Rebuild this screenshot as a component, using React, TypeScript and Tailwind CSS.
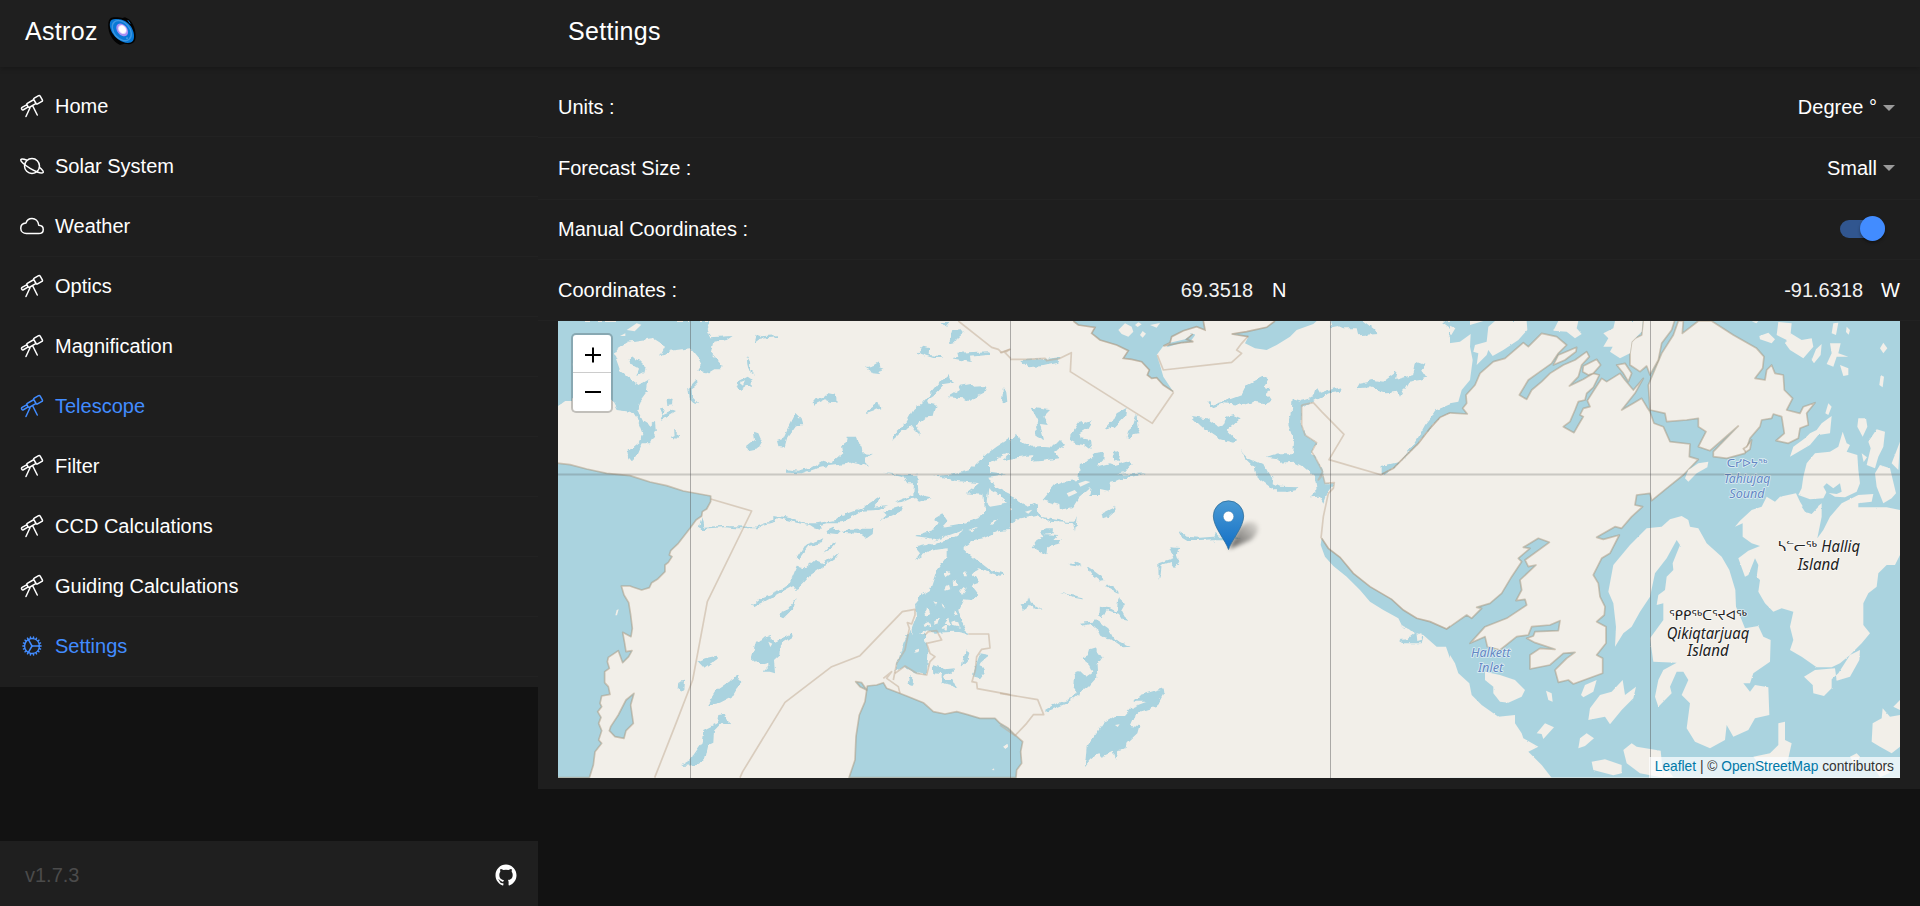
import React from "react";
import {
  IoTelescopeOutline,
  IoPlanetOutline,
  IoCloudOutline,
  IoCogOutline,
  IoLogoGithub,
} from "react-icons/io5";
import type { IconType } from "react-icons";

type NavItem = { label: string; icon: IconType; active?: boolean };

const NAV: NavItem[] = [
  { label: "Home", icon: IoTelescopeOutline },
  { label: "Solar System", icon: IoPlanetOutline },
  { label: "Weather", icon: IoCloudOutline },
  { label: "Optics", icon: IoTelescopeOutline },
  { label: "Magnification", icon: IoTelescopeOutline },
  { label: "Telescope", icon: IoTelescopeOutline, active: true },
  { label: "Filter", icon: IoTelescopeOutline },
  { label: "CCD Calculations", icon: IoTelescopeOutline },
  { label: "Guiding Calculations", icon: IoTelescopeOutline },
  { label: "Settings", icon: IoCogOutline, active: true },
];

const WATER = "#aad3df";
const LAND = "#f2efe9";

/* West sheet: open sea and bays that carry a coast line */
const WEST_SEA = [
  "M0,457 L60,464 110,477 170,490 240,497 300,516 350,527 400,543 482,558 482,575 470,597 457,605 455,618 438,630 420,655 385,700 362,722 358,735 366,740 355,757 345,765 345,785 322,808 305,818 298,833 275,840 250,832 240,828 214,828 222,855 236,878 242,915 247,955 243,980 218,967 224,1000 228,1025 246,1022 236,1040 218,1058 205,1022 175,1042 172,1055 178,1075 164,1085 164,1118 175,1130 180,1153 155,1158 150,1180 155,1190 143,1205 153,1222 146,1240 155,1262 146,1290 155,1300 135,1325 130,1365 118,1403 0,1403Z",
  "M182,1250 L205,1215 228,1170 252,1150 242,1185 250,1240 228,1262 222,1285 195,1280 178,1262Z",
  "M897,1403 L915,1350 918,1280 928,1215 945,1175 952,1128 980,1125 1000,1118 1010,1135 1045,1148 1070,1158 1120,1178 1150,1205 1185,1212 1220,1205 1250,1213 1290,1225 1335,1225 1350,1240 1375,1255 1395,1275 1418,1295 1412,1325 1415,1360 1400,1380 1398,1403Z",
  "M917,1115 L935,1118 950,1140 930,1130Z",
];

/* West sheet: lakes */
const WEST_LAKES = [
  "M24,33 L480,33 470,60 480,82 548,78 530,90 490,95 482,130 515,165 512,178 490,178 470,190 442,185 455,165 445,145 420,115 360,122 330,140 345,110 305,85 235,95 200,118 192,130 210,180 265,225 295,208 290,245 268,275 262,300 280,335 300,348 315,335 318,365 300,400 275,400 262,430 250,450 235,448 232,425 270,395 280,370 262,320 240,305 200,300 180,262 60,262 24,288Z",
  "M236,145 l15,-6 5,12 15,3 16,16 -4,16 -24,12 8,-22 -26,-14Z",
  "M350,265 l18,5 -2,16 -14,2Z M330,295 l12,-2 -4,20 30,-14 10,4 -48,30 8,-20Z",
  "M372,352 l6,14 14,8 -20,18 -10,-8 12,-6Z",
  "M438,210 L440,228 425,238 426,260 445,280 430,276 416,262 412,238Z",
  "M614,98 L620,74 632,79 684,76 684,82 630,86Z",
  "M590,137 L600,155 601,180 614,195 598,185 592,160Z M590,200 L608,212 608,228 592,224 570,240 560,230 566,212Z M572,216 l16,-6 -6,14Z",
  "M788,278 L800,264 820,260 832,249 858,254 860,278 842,275 825,268 790,284Z",
  "M948,172 L970,166 985,157 988,172 1000,176 988,192 968,190 960,178Z",
  "M947,310 L960,292 985,274 991,295 968,302Z",
  "M736,312 L752,328 757,346 738,346 712,382 704,410 685,408 681,393 700,386 712,360Z",
  "M612,365 L625,370 636,395 625,415 595,421 588,408 600,398 615,388Z",
  "M890,380 L918,380 922,398 935,410 938,430 968,432 945,445 945,460 955,470 930,460 905,455 890,462 835,468 790,478 755,490 710,488 712,478 745,482 790,470 820,452 845,460 880,430 876,408 888,400Z",
  "M1028,390 L1030,372 1070,335 1090,300 1120,275 1150,240 1175,210 1195,192 1200,205 1215,215 1200,222 1180,225 1148,258 1130,270 1135,280 1160,285 1150,320 1130,322 1100,345 1110,375 1095,360 1085,345 1055,365Z",
  "M1195,262 L1230,240 1225,228 1260,222 1270,230 1310,228 1305,245 1285,255 1262,275 1240,265Z",
  "M1205,145 L1225,140 1222,128 1318,124 1320,134 1260,140 1262,156 1232,150Z",
  "M1100,128 L1120,110 1138,115 1136,135 1170,138 1180,144 1150,144Z",
  "M1196,102 L1210,60 1232,58 1240,68 1225,80 1218,95Z M1172,36 l26,0 -12,14Z",
  "M1362,232 L1368,245 1370,275 1360,280 1356,270Z",
  "M1145,500 L1215,492 1260,480 1300,440 1340,410 1380,385 1380,420 1320,460 1320,485 1370,492 1318,500 1335,530 1380,552 1380,565 1340,550 1315,535 1310,575 1320,590 1380,580 1380,655 1350,662 1300,685 1270,690 1240,715 1270,742 1320,780 1362,790 1350,797 1285,778 1262,790 1290,815 1262,825 1285,855 1265,870 1240,868 1225,900 1235,935 1255,975 1210,965 1160,968 1115,962 1105,985 1085,975 1085,955 1098,920 1095,880 1115,855 1140,840 1160,780 1190,740 1190,715 1140,722 1095,750 1110,730 1095,712 1130,705 1160,688 1110,680 1095,678 1150,660 1165,640 1150,628 1180,610 1195,632 1180,650 1240,640 1285,625 1305,600 1300,555 1250,550 1290,520 1215,512 1180,502Z",
  "M1000,488 L1060,496 1102,494 1105,550 1125,562 1145,565 1110,575 1095,560 1060,575 1035,578 1050,570 1090,555 1092,520 1072,520 1060,502Z",
  "M988,560 L985,575 972,590 1015,585 980,600 938,602 900,625 875,640 830,640 810,645 812,660 795,655 780,645 740,638 680,622 676,635 640,645 620,655 560,655 520,652 475,655 460,662 446,655 455,618 460,650 520,648 615,650 670,632 670,615 720,625 765,640 800,640 855,630 870,618 935,595Z",
  "M1058,588 L1050,605 990,634 1010,615 1000,605Z",
  "M830,660 L850,650 870,665 860,675 832,672Z M876,668 L895,656 970,656 968,672 950,685 930,672Z",
  "M820,685 L812,700 775,708 745,750 740,745 765,705Z M860,694 L848,712 820,728 838,708Z",
  "M603,887 L635,862 690,840 720,818 740,770 765,775 795,750 820,760 868,727 855,745 820,768 782,795 760,820 740,840 730,828 680,855 612,892Z",
  "M740,864 L730,895 700,925 690,920 695,905 712,898Z",
  "M605,1045 L618,995 658,978 675,995 725,973 728,980 690,1005 688,1035 672,1050 675,1090 660,1085 640,1085 655,1070 655,1058 630,1065Z",
  "M442,1055 L465,1045 500,1037 500,1048 460,1075Z M386,1140 L388,1115 402,1112 400,1140 392,1146Z",
  "M470,1188 L500,1140 570,1092 565,1110 578,1115 560,1135 545,1160 510,1178Z",
  "M390,1368 L420,1350 455,1300 460,1260 500,1240 505,1215 525,1212 530,1230 545,1243 515,1238 492,1262 490,1298 475,1305 465,1350 440,1365Z",
  "M1035,1085 L1060,1000 1080,955 1085,975 1125,968 1125,990 1135,1030 1130,1095 1100,1090 1060,1070Z",
  "M1148,1065 L1185,1078 1215,1075 1200,1090 1180,1095 1185,1110 1210,1110 1222,1138 1205,1125 1175,1118 1175,1092 1150,1090Z",
  "M1250,1018 L1258,1030 1250,1055 1235,1070 1240,1045Z M1270,1090 L1280,1060 1290,1030 1318,1035 1290,1060 1305,1085 1290,1105 1270,1100Z M1078,1095 l12,15 -5,18 -12,-6Z",
];

const WEST_SPECKS = [
  "M1180,790 l14,-8 8,10 -14,10Z M1205,815 l14,-6 6,14 -18,6Z M1240,790 l8,-6 6,18 -12,0Z M1185,830 l12,-6 4,14 -14,4Z M1230,845 l14,-14 6,6 -14,18Z",
  "M1125,900 l10,-8 6,20 -12,10Z M1150,870 l12,6 -4,8Z M1150,935 l20,-10 -4,14 -16,6Z M1185,940 l10,-14 8,18 -12,8Z M1215,900 l8,14 -12,6Z M1205,930 l20,4 4,16 -20,-6Z M1095,1020 l12,-4 2,10 -12,2Z M1175,880 l8,8 -4,8Z M1120,945 l18,-10 6,12 -18,6Z M1170,960 l16,-12 6,10Z",
  "M1130,700 l50,-18 60,-22 -20,18 -70,26Z M1255,660 l26,-10 -14,14Z M1320,640 l28,-14 -20,18Z",
  "M230,60 l30,-20 14,4 -20,20Z M210,78 l16,-8 0,8Z M68,160 l4,4 -3,6Z M1360,1310 l12,-8 2,8 -8,6Z M1325,1380 l7,-5 1,6Z M200,900 l6,-2 -5,18 -5,0Z M655,995 l12,6 -6,10Z",
];

const WEST_BOUNDS = [
  "M482,567 L605,603 472,875 428,1110 380,1235 314,1403",
  "M570,1403 L578,1385 705,1177 845,1070 930,1037 1057,905 1095,898 1095,915 1085,942 1072,938 1078,955 1065,1020 1040,1060 1030,1110",
  "M1225,33 L1325,112 1345,118 1355,128 1380,118",
  "M1255,972 L1316,972 1320,1014 1295,1018 1280,1040 1276,1080 1266,1115 1280,1118 1282,1136 1380,1154",
  "M1125,975 L1135,965 1160,962 1175,990 1130,1000 1140,1030 1155,1040 1140,1055 1130,1095 1100,1090 1065,1068 1035,1090 M1000,1105 L1025,1085 1010,1105 1045,1130 1050,1150",
];

/* Middle sheet */
const MID_SEA = [
  "M220,33 L610,33 615,60 590,50 550,62 515,80 510,98 490,108 470,135 480,165 490,200 520,245 490,225 470,203 455,205 442,195 448,180 425,155 395,148 370,145 385,122 350,105 300,90 275,70 285,52 235,45Z",
  "M825,33 L800,52 740,65 695,72 745,80 735,100 765,115 800,120 830,105 870,80 890,60 940,42 950,33Z",
  "M500,112 L545,98 580,95 560,88 578,72 555,88 510,98Z",
  "M965,685 L985,715 1020,742 1060,790 1110,830 1175,868 1210,900 1250,925 1290,935 1340,957 1365,937 1380,935 1380,1110 1365,1075 1350,1045 1338,1010 1310,1010 1270,975 1245,968 1205,945 1195,925 1150,900 1110,875 1080,840 1040,800 1000,768 975,740 962,705Z",
];

const MID_LAKES = [
  "M60,150 L130,148 182,142 175,158 130,168 85,172Z M8,232 L18,240 22,275 8,280Z M95,293 L150,300 130,320 145,345 120,342 132,390 110,380 105,350 118,335Z",
  "M0,415 L30,395 50,368 60,395 95,410 130,408 160,410 182,388 195,405 165,425 178,445 130,452 95,455 100,435 60,440 5,452 30,432 0,435Z",
  "M212,392 L215,370 240,332 250,342 275,333 262,355 238,370 242,385 270,390 275,420 255,405 230,402Z",
  "M312,360 L340,330 350,310 378,295 376,318 345,350Z M410,310 L412,350 422,370 400,372 392,388 380,385 385,362 398,350Z",
  "M128,570 L165,525 190,515 235,510 240,462 280,445 278,430 312,425 310,450 290,470 330,460 345,465 380,455 395,460 370,490 350,495 400,492 438,490 400,500 330,515 325,545 300,540 300,555 268,555 272,530 238,560 220,590 180,600 178,585Z M340,420 l20,14 -4,20 -14,-8Z",
  "M0,492 l16,2 -10,6Z M0,545 L40,565 80,588 118,578 110,600 130,622 200,635 222,635 230,622 225,665 220,640 150,635 110,615 60,625 20,645 32,660 0,662 0,620 40,595 0,562Z",
  "M305,610 L345,590 348,602 330,618 308,625Z M120,665 L135,655 162,655 160,668 130,672 175,675 160,690 185,690 180,700 145,708 142,735 128,728 95,710 110,690 130,680Z",
  "M205,765 L225,757 248,765 238,770Z M260,768 L275,778 318,810 300,812 270,790Z M315,828 L338,826 358,852 335,840Z M180,848 L248,862 246,868 215,862Z M62,880 L85,878 88,862 92,880 125,900 105,896 90,885 68,900Z M0,788 l12,5 -10,4Z",
  "M355,865 L375,882 365,900 382,932 370,930 358,912 320,900 308,925 298,915 300,890 330,895 350,905Z M240,938 L275,935 285,928 325,955 340,985 392,1010 370,1012 330,985 305,980 300,965 270,942 245,948Z",
  "M245,1045 L265,1035 270,1018 290,1012 290,1032 308,1038 290,1065 292,1100 265,1130 240,1150 200,1180 140,1205 135,1200 160,1185 215,1165 230,1145 220,1130 222,1095 240,1083 258,1100 280,1085 270,1065Z",
  "M255,1368 L260,1310 290,1270 310,1240 345,1218 375,1218 400,1190 440,1175 400,1175 420,1155 490,1135 494,1145 470,1190 420,1205 400,1222 390,1245 418,1248 412,1270 380,1300 375,1315 355,1320 345,1348 338,1325 305,1340 295,1330 270,1350Z",
  "M538,662 L560,680 600,683 640,680 645,670 655,680 700,680 720,685 690,688 640,688 600,690 565,690 545,678Z M640,690 l5,16 -6,-6Z M508,712 L540,714 530,730 538,755 522,775 515,765 515,755 485,765 482,790 476,810 475,760 520,745Z",
  "M622,272 L632,295 670,280 730,285 760,275 795,280 812,272 800,255 805,235 790,230 805,208 788,200 740,225 725,255 690,268 635,285 628,270Z",
  "M572,318 L620,325 655,350 670,345 680,320 700,315 722,325 700,345 680,360 708,390 700,398 660,388 610,355Z",
  "M723,420 L745,445 790,465 800,485 820,500 818,520 840,530 895,532 890,540 865,545 830,545 795,520 770,500 765,475 740,450Z",
  "M575,70 l10,6 -12,16 -24,8Z",
  "M878,265 L905,272 940,262 950,232 960,248 985,240 1022,232 1018,245 990,250 960,262 935,275 905,295 905,345 915,375 950,398 935,425 950,450 968,480 975,520 1003,520 980,550 970,578 960,560 930,562 950,540 945,500 910,470 880,455 840,458 832,445 800,440 835,430 880,430 882,395 865,345 875,310Z",
  "M1070,235 L1080,218 1120,210 1150,215 1190,185 1185,210 1240,195 1248,155 1275,165 1262,185 1285,200 1260,210 1225,215 1200,260 1190,245 1160,250 1110,232Z",
  "M1145,490 L1145,468 1200,455 1245,400 1275,345 1310,300 1380,270 1380,310 1350,308 1320,322 1290,355 1255,400 1215,440 1180,475 1150,495Z",
  "M990,33 L1090,33 1125,60 1132,72 1075,76 1070,55 1030,55 1015,48 995,52Z M1325,38 L1380,33 1380,92 1345,78 1355,60Z",
  "M1200,945 L1240,965 1270,980 1265,1000 1215,1000 1200,990 1222,988 1250,965Z",
];

const MID_SPECKS = [
  "M355,60 L375,40 395,50 400,65 385,80 365,72Z M420,75 l8,-12 10,8 -10,12Z M450,45 l30,-6 -10,14Z M405,45 l10,-8 10,6 -12,8Z M200,550 l24,-10 8,8 -26,12Z M305,1150 l14,0 -8,6Z M345,1245 l14,-2 -6,8Z M1250,975 l14,-6 2,20 -14,4Z M10,1310 l12,-8 2,8 -8,6Z",
  "M235,520 l22,-8 14,4 -30,14Z M75,605 l22,-6 -12,12Z",
];

const MID_BOUNDS = [
  "M0,128 L30,118 15,128 32,145 M30,148 L80,148 135,145 140,152 180,145 214,128 211,185 457,340 521,247",
  "M472,135 L490,180 695,157 725,130 710,120 725,100 745,78",
  "M905,285 L940,278 965,305 1032,373 987,449 1145,495",
  "M985,550 L970,620 963,685",
  "M0,1150 L113,1169 131,1214 100,1214 80,1240 45,1277 0,1245",
  "M905,285 L905,345 915,375 950,398 935,425 950,450 968,485 955,510 968,495 975,520 1003,518 1000,535 985,550",
];

const MID_COAST =
  "M220,33 L235,45 285,52 275,70 300,90 350,105 385,122 370,145 395,148 425,155 448,180 442,195 455,205 470,203 490,225 520,245 M610,33 L615,60 590,50 550,62 515,80 510,98 490,108 545,98 580,95 560,88 578,72 M825,33 L800,52 740,65 695,72 745,80 M965,685 L985,715 1020,742 1060,790 1110,830 1175,868 1210,900 1250,925 1290,935 1340,957 1352,948 M1145,493 L1180,475 1215,440 1255,400 1290,355 1320,322 1350,308";

/* East sheet: drawn as land over open water */
const EAST_COAST = [
  "M-40,312 L-10,308 52,312 38,295 50,280 48,255 75,225 90,190 130,155 165,145 220,98 235,110 275,70 320,80 350,105 325,130 305,160 270,185 235,210 208,255 230,268 245,240 275,215 300,190 340,165 375,150 410,125 418,140 395,165 385,200 358,228 400,208 430,190 448,195 430,232 410,250 405,270 385,275 375,300 360,335 340,350 372,368 385,345 400,320 390,315 400,295 420,290 412,272 440,228 455,205 470,215 510,190 525,210 550,240 580,205 555,250 515,300 550,280 575,265 590,290 600,305 612,340 640,350 660,395 720,402 718,440 745,448 700,495 650,535 605,572 600,550 560,555 555,585 578,590 545,620 515,655 495,650 440,682 460,688 508,675 480,730 455,745 430,795 445,820 450,860 465,890 463,915 440,935 468,950 468,1000 440,1035 458,1045 458,1090 370,1122 355,1110 325,1117 315,1080 350,1045 375,1027 340,1030 300,1065 240,1077 240,1035 270,1015 315,1018 255,998 230,985 250,978 255,965 325,962 330,932 300,945 245,950 235,975 200,980 150,1020 112,1010 105,980 60,1000 105,950 170,925 230,885 225,868 198,872 215,840 210,810 258,765 235,770 225,750 298,697 265,685 220,712 240,715 205,745 215,755 185,800 155,850 120,880 80,892 95,895 65,925 50,915 0,950 -25,938 -40,960Z",
  "M700,33 L697,70 745,33 785,33 850,75 920,115 942,140 938,175 915,205 945,210 950,180 965,165 975,190 1000,195 1003,240 1028,265 1010,300 1050,310 1060,290 1095,278 1070,310 1075,345 1050,355 1045,385 1015,400 978,392 1003,370 995,320 970,312 965,325 935,330 930,350 900,385 885,430 830,445 790,440 790,425 865,348 780,422 745,410 768,365 745,350 745,325 710,330 650,335 645,310 600,300 595,225 635,130 670,75 685,33Z",
  "M580,28 L675,28 665,60 635,100 625,150 600,195 590,168 570,185 540,165 540,130 545,95 555,85 575,75Z",
  "M310,165 L325,135 380,112 378,125 345,150Z M398,185 L400,168 440,148 452,165 430,190 415,195Z",
  "M905,390 l-5,28 -12,8 -8,-10 10,-6Z M500,165 l25,-5 20,30 -10,25 -15,-25Z",
];

const EAST_ISLANDS = [
  "M-20,1010 L0,1035 15,1060 25,1090 58,1120 65,1155 95,1185 145,1220 195,1215 195,1240 215,1270 220,1285 265,1310 235,1325 275,1365 310,1410 -20,1410Z",
  "M-4,100 L30,95 62,72 60,110 68,150 60,210 35,240 25,275 0,280 -4,280Z M-4,45 l20,10 -12,20 -8,-4Z",
  "M135,33 L230,33 232,60 205,90 160,120 128,138 115,120 110,135 80,165 85,130 70,125 75,105 110,95 115,50Z M60,33 l40,0 -40,12Z",
  "M325,33 L385,33 380,55 395,72 375,85 350,65 310,62Z",
  "M495,33 L578,33 575,65 545,95 540,130 510,145 480,125 488,110 460,110 475,85 460,70 490,55Z",
  "M985,36 L1025,40 1022,70 1055,90 1085,85 1090,110 1060,145 1020,120 1005,100 1010,90 980,75Z M928,78 L955,68 975,88 965,100 930,88Z M1115,102 L1112,135 1092,160 1085,150 1098,118Z M1140,100 L1172,100 1165,130 1195,140 1160,140 1150,170 1130,162 1145,130Z M1170,165 L1195,175 1195,195 1180,198Z M1150,40 L1165,38 1158,75 1145,70Z M1190,50 l10,10 -4,14 -8,-8Z M1300,98 L1312,115 1300,130 1290,115Z M1292,195 L1302,200 1298,232 1288,225Z M905,34 l20,0 -6,6Z",
  "M1135,280 L1145,290 1135,315 1126,310Z M1145,318 L1140,370 1105,375 1080,405 1020,440 1030,410 1065,385 1080,370 1100,360 1115,340Z M1225,325 L1248,325 1252,350 1238,380 1222,350Z",
  "M775,455 L772,472 740,490 715,515 705,505 715,480 745,460Z",
  "M1178,365 L1190,400 1200,405 1190,425 1222,435 1225,480 1230,520 1220,545 1185,562 1155,560 1130,545 1120,565 1080,568 1045,555 1055,535 1060,500 1070,460 1095,430 1140,425 1165,410Z",
  "M1280,358 L1305,365 1300,410 1285,440 1275,475 1250,465 1262,415 1255,395Z M1350,395 L1345,480 1325,460Z M1290,465 L1320,475 1338,550 1325,565 1300,580 1280,530 1275,490Z M1235,430 l16,12 -10,14Z",
  "M1350,600 L1310,592 1225,592 1225,580 1265,575 1270,552 1225,555 1175,580 1140,620 1120,660 1102,685 1115,620 1115,580 1100,592 1070,608 1050,575 1038,550 990,560 975,575 950,560 935,590 905,600 870,632 855,650 878,640 878,680 905,700 930,708 895,722 865,745 885,800 895,795 915,745 925,765 920,800 930,810 925,845 945,880 970,905 995,895 1030,905 1020,950 1030,990 1020,1020 1055,1040 1100,1072 1145,1072 1170,1060 1200,1035 1230,1020 1228,1050 1200,1100 1160,1112 1155,1075 1095,1080 1062,1100 1088,1125 1090,1150 1122,1158 1145,1135 1145,1108 1165,1090 1200,1035 1235,1000 1260,970 1240,945 1240,880 1255,850 1280,830 1285,790 1310,765 1335,765 1350,735Z",
  "M695,618 L715,630 720,650 745,655 770,700 815,740 838,780 856,840 858,890 875,930 885,955 925,948 940,980 962,990 960,1055 910,1090 900,1120 880,1120 900,1145 915,1125 955,1132 958,1215 915,1225 895,1260 850,1280 830,1245 825,1290 780,1315 735,1295 710,1255 720,1180 695,1155 715,1110 700,1085 680,1085 660,1130 665,1150 625,1190 615,1160 625,1110 640,1080 680,1058 610,1055 605,1020 600,985 640,930 640,880 620,885 625,855 645,840 650,800 670,780 668,760 690,705 680,690 650,745 615,790 600,860 570,905 545,950 520,970 495,1010 498,950 490,880 475,845 490,765 540,705 590,655 635,650 660,628Z",
  "M105,1085 L150,1095 195,1110 225,1140 215,1160 175,1178 150,1175 130,1150 130,1130 105,1110Z M288,1142 L305,1150 308,1175 295,1170Z M440,1110 L430,1145 400,1162 393,1155 405,1125Z",
  "M415,1230 L420,1195 450,1155 485,1145 518,1110 525,1155 558,1130 550,1165 515,1200 480,1243 465,1220Z M260,1270 L285,1240 312,1252 280,1287 275,1272Z M385,1315 L390,1285 410,1270 432,1285 405,1308Z M425,1355 L465,1348 515,1365 515,1390 490,1396 450,1385 430,1380Z M520,1320 L545,1300 560,1310 632,1322 640,1403 570,1390 530,1360Z",
  "M1350,1170 L1330,1190 1350,1200Z M1298,1195 L1320,1220 1350,1215 1350,1310 1325,1330 1290,1310 1265,1295 1268,1240 1295,1225Z M985,1240 L1005,1235 1005,1290 1025,1300 1015,1345 1000,1370 940,1380 910,1340 960,1330 985,1305Z M1200,1340 l20,-10 10,10 -14,30Z M640,1365 l30,35 -30,3Z M1270,1370 l30,-12 20,30 -30,14Z",
];

const EAST_INLETS = [
  "M1055,590 L1095,575 1105,590 1085,612 1065,605Z M1130,520 L1150,535 1170,520 1175,545 1160,552 1130,548 1120,530Z",
];

function Logo() {
  return (
    <svg viewBox="0 0 28 28" className="h-7 w-7">
      <path d="M3.5 .8 C8 -.2 12 .6 14.5 1 L17 .2 L21 2.2 C25.5 6.5 28 13 27.6 20.5 C27.3 24.8 25 26.8 21 27.2 L16.5 26.8 L12 28 L9 26.2 C4 22.5 .3 16 .2 8.5 C.2 4 1.2 1.8 3.5 .8Z" fill="#030303" />
      <path d="M5.5 2.2 C13 .8 19.5 4.2 23 9.5 C26.2 14.5 27 20.5 25 23.8 C22 27.5 15.5 26.2 10.5 22.5 C5 18.5 1.6 12.5 1.8 7.2 C1.9 4.2 3 2.7 5.5 2.2Z" fill="#0878d6" />
      <ellipse cx="13.8" cy="13.6" rx="11.4" ry="7.9" transform="rotate(50 13.8 13.6)" fill="none" stroke="#3e97df" strokeWidth="1.4" />
      <ellipse cx="14.2" cy="12.9" rx="7.2" ry="5" transform="rotate(52 14.2 12.9)" fill="#a78ff2" />
      <ellipse cx="14.4" cy="12.5" rx="5" ry="3.9" transform="rotate(52 14.4 12.5)" fill="#e3d6ff" />
      <ellipse cx="14.4" cy="12.4" rx="3.9" ry="3.1" transform="rotate(52 14.4 12.4)" fill="#fff" />
      <circle cx="19" cy="21" r=".5" fill="#dff" />
      <path d="M19.8 3.2 L22.2 6.6" stroke="#0878d6" strokeWidth="1" />
    </svg>
  );
}

function Shapes({ paths, fill, stroke }: { paths: string[]; fill: string; stroke?: string }) {
  return (
    <>
      {paths.map((d, i) => (
        <path key={i} d={d} fill={fill} fillRule="evenodd" stroke={stroke} strokeOpacity={0.5} strokeWidth={stroke ? 5 : 0} strokeLinejoin="round" />
      ))}
    </>
  );
}

type LabelProps = { x: number; y: number; w: number; size: number; fill: string; upright?: boolean; children: string };

function Label({ x, y, w, size, fill, upright, children }: LabelProps) {
  return (
    <text
      x={x}
      y={y}
      textLength={w}
      lengthAdjust="spacingAndGlyphs"
      fontFamily="'Noto Sans','DejaVu Sans',sans-serif"
      fontStyle={upright ? "normal" : "italic"}
      fontSize={size}
      fill={fill}
      textAnchor="middle"
      stroke="#ffffff"
      strokeOpacity={0.6}
      strokeWidth={5}
      paintOrder="stroke"
      strokeLinejoin="round"
    >
      {children}
    </text>
  );
}

function MapCanvas() {
  const coast = "#a8957c";
  const bound = "#c0aa92";
  const sea = "#6387c4";
  const ink = "#222222";
  return (
    <svg viewBox="558 321 1342 457" className="block h-[457px] w-[1342px]">
      <defs>
        <filter id="rough" x="-5%" y="-5%" width="110%" height="110%">
          <feTurbulence type="fractalNoise" baseFrequency="0.16" numOctaves="2" seed="4" />
          <feDisplacementMap in="SourceGraphic" scale="5" xChannelSelector="R" yChannelSelector="G" />
        </filter>
        <filter id="fray" x="-5%" y="-5%" width="110%" height="110%">
          <feTurbulence type="fractalNoise" baseFrequency="0.2" numOctaves="2" seed="9" />
          <feDisplacementMap in="SourceGraphic" scale="3.5" xChannelSelector="R" yChannelSelector="G" />
        </filter>
        <linearGradient id="pin" x1="0" y1="0" x2="0" y2="1">
          <stop offset="0" stopColor="#4a9ad4" />
          <stop offset="1" stopColor="#126fc6" />
        </linearGradient>
        <linearGradient id="shade" x1="0" y1="1" x2="1" y2="0">
          <stop offset="0" stopColor="#000" stopOpacity="0.65" />
          <stop offset="1" stopColor="#000" stopOpacity="0.05" />
        </linearGradient>
        <filter id="soft" x="-30%" y="-30%" width="160%" height="160%">
          <feGaussianBlur stdDeviation="2.2" />
        </filter>
        <clipPath id="eastClip">
          <rect x="0" y="0" width="1350" height="1403" />
        </clipPath>
      </defs>
      <rect x="558" y="321" width="1342" height="457" fill={LAND} />
      <g filter="url(#rough)">
        <g transform="translate(550 310) scale(.33333)">
          <Shapes paths={WEST_LAKES} fill={WATER} />
          <Shapes paths={WEST_SPECKS.slice(0, 3)} fill={LAND} />
        </g>
        <g transform="translate(1000 310) scale(.33333)">
          <Shapes paths={MID_LAKES} fill={WATER} />
        </g>
      </g>
      <rect x="558" y="321" width="14" height="80" fill={WATER} />
      <path d="M558 406 L574 395 H558Z" fill={WATER} />
      <g transform="translate(550 310) scale(.33333)">
        <g filter="url(#fray)">
          <Shapes paths={WEST_SEA} fill={WATER} stroke={coast} />
        </g>
        <Shapes paths={WEST_SPECKS.slice(3)} fill={LAND} />
        <Shapes paths={WEST_BOUNDS} fill="none" stroke={bound} />
      </g>
      <g transform="translate(1000 310) scale(.33333)">
        <Shapes paths={MID_SEA} fill={WATER} />
        <Shapes paths={MID_SPECKS} fill={LAND} />
        <Shapes paths={MID_BOUNDS} fill="none" stroke={bound} />
        <path d={MID_COAST} fill="none" stroke={coast} strokeOpacity={0.6} strokeWidth={5} />
      </g>
      <g transform="translate(1450 310) scale(.33333)">
        <g clipPath="url(#eastClip)">
          <rect x="0" y="0" width="1350" height="1403" fill={WATER} />
          <Shapes paths={EAST_COAST} fill={LAND} stroke={coast} />
          <g filter="url(#rough)">
            <Shapes paths={EAST_ISLANDS} fill={LAND} />
            <Shapes paths={EAST_INLETS} fill={WATER} />
          </g>
        </g>
        <Label x={891} y={472} w={122} size={34} fill={sea} upright>ᑕᓯᐅᔭᖅ</Label>
        <Label x={891} y={518} w={140} size={39} fill={sea}>Tahiujaq</Label>
        <Label x={891} y={563} w={106} size={39} fill={sea}>Sound</Label>
        <Label x={122} y={1041} w={118} size={39} fill={sea}>Halkett</Label>
        <Label x={122} y={1086} w={76} size={39} fill={sea}>Inlet</Label>
        <Label x={1042} y={724} w={118} size={38} fill={ink} upright>ᓴᓪᓕᖅ</Label>
        <Label x={1172} y={727} w={116} size={46} fill={ink}>Halliq</Label>
        <Label x={1105} y={780} w={124} size={46} fill={ink}>Island</Label>
        <Label x={774} y={930} w={234} size={40} fill={ink} upright>ᕿᑭᖅᑕᕐᔪᐊᖅ</Label>
        <Label x={774} y={986} w={248} size={46} fill={ink}>Qikiqtarjuaq</Label>
        <Label x={774} y={1039} w={124} size={46} fill={ink}>Island</Label>
      </g>
      <g stroke="#555" strokeOpacity="0.45" strokeWidth="1">
        <path d="M690.5 321V778M1010.5 321V778M1330.5 321V778M1650.5 321V778" />
        <path d="M558 474.5H1900" strokeWidth="2" strokeOpacity="0.25" />
      </g>
      <path d="M1229 549 L1238 529 Q1247 519 1256 523 Q1262 530 1251 540Z" fill="url(#shade)" filter="url(#soft)" />
      <path d="M1228.5 549.5 C1226 541 1213.3 527 1213.3 516 A15.2 15.2 0 0 1 1243.7 516 C1243.7 527 1231 541 1228.5 549.5Z" fill="url(#pin)" stroke="#2e6c97" strokeOpacity="0.75" strokeWidth="1" />
      <circle cx="1228.5" cy="516.5" r="5.2" fill="#fff" stroke="#2e6c97" strokeOpacity="0.4" strokeWidth="0.8" />
    </svg>
  );
}

function Row({ label, className, children }: { label: string; className: string; children: React.ReactNode }) {
  return (
    <div className={`flex items-center px-5 ${className}`}>
      <span className="flex-1">{label}</span>
      {children}
    </div>
  );
}

function Select({ value }: { value: string }) {
  return (
    <button className="flex items-center gap-[6px] pr-[5px]">
      <span>{value}</span>
      <svg viewBox="0 0 12 6" className="mt-px h-1.5 w-3">
        <path d="M0 0H12L6 6Z" fill="#9a9a9a" />
      </svg>
    </button>
  );
}

export default function App() {
  return (
    <div className="flex h-[906px] w-[1920px] flex-col overflow-hidden bg-[#121212] font-['Liberation_Sans',Arial,sans-serif] text-[20px] leading-6 text-white">
      <div className="z-10 flex h-[67px] shrink-0 items-center bg-[#1f1f1f] pb-[5px] shadow-[0_2px_5px_rgba(0,0,0,0.2)]">
        <header className="flex w-[538px] items-center gap-[10px] pl-[25px]">
          <h1 className="text-[25px] font-normal tracking-[0.0125em]">Astroz</h1>
          <Logo />
        </header>
        <header className="pl-[30px]">
          <h2 className="text-[25px] font-normal tracking-[0.0125em]">Settings</h2>
        </header>
      </div>

      <div className="flex min-h-0 flex-1">
        <aside className="flex w-[538px] flex-col">
          <nav className="bg-[#1e1e1e] py-[10px]">
            {NAV.map(({ label, icon: Icon, active }) => (
              <a key={label} className={`flex h-[60px] pl-5 ${active ? "text-[#428cff]" : "text-white"}`}>
                <span className="flex flex-1 items-center gap-[11px] border-b border-[#222222] pb-px">
                  <Icon className="h-6 w-6" />
                  <span>{label}</span>
                </span>
              </a>
            ))}
          </nav>
          <footer className="mt-auto flex h-[65px] items-center justify-between bg-[#1f1f1f] pl-[25px] pr-5">
            <span className="pt-[3px] text-[#4b4b4b]">v1.7.3</span>
            <IoLogoGithub className="mt-[3px] h-6 w-6" />
          </footer>
        </aside>

        <main className="flex w-[1382px] flex-col">
          <section className="bg-[#1e1e1e] pb-[11px] pt-[10px]">
            <Row label="Units :" className="h-[61px] border-b border-[#222222]">
              <Select value="Degree °" />
            </Row>
            <Row label="Forecast Size :" className="h-[62px] border-b border-[#222222] pb-[2px]">
              <Select value="Small" />
            </Row>
            <Row label="Manual Coordinates :" className="h-[60px] border-b border-[#222222] pb-[2px]">
              <span className="mr-[15px] flex h-[18px] w-[45px] items-center justify-end rounded-full bg-[#31568f]">
                <span className="h-[25px] w-[25px] shrink-0 rounded-full bg-[#428cff] shadow-[0_2px_3px_rgba(0,0,0,0.35)]" />
              </span>
            </Row>
            <div className="grid h-[61px] grid-cols-[535px_194px_1fr] items-center border-b border-[#222222] px-5">
              <span>Coordinates :</span>
              <span className="flex justify-end gap-[19px]">
                <span className="text-[#f2f2f2]">69.3518</span>
                <span className="w-[15px] whitespace-pre">N</span>
              </span>
              <span className="flex justify-end gap-[18px]">
                <span className="text-[#f2f2f2]">-91.6318</span>
                <span>W</span>
              </span>
            </div>
            <div className="relative ml-5 h-[457px] w-[1342px] overflow-hidden">
              <MapCanvas />
              <div className="absolute left-[13px] top-[12px] flex w-[42px] flex-col overflow-hidden rounded-[5px] border-2 border-black/20 bg-white bg-clip-padding text-black">
                <button className="flex h-[38px] items-center justify-center border-b border-[#ccc] pl-0.5 pt-0.5">
                  <svg viewBox="0 0 16 16" className="h-4 w-4">
                    <path d="M8 .5V15.5M0 8H16" stroke="#000" strokeWidth="2" />
                  </svg>
                </button>
                <button className="flex h-[38px] items-center justify-center pl-0.5">
                  <svg viewBox="0 0 16 16" className="h-4 w-4">
                    <path d="M0 8H16" stroke="#000" strokeWidth="2" />
                  </svg>
                </button>
              </div>
              <div className="absolute bottom-0 right-0 flex h-[21px] items-center whitespace-pre bg-white/70 px-[6px] pb-px text-[13.75px] leading-5 text-[#333]">
                <a className="text-[#0078a8]">Leaflet</a>
                <span> | © </span>
                <a className="text-[#0078a8]">OpenStreetMap</a>
                <span> contributors</span>
              </div>
            </div>
          </section>
        </main>
      </div>
    </div>
  );
}
